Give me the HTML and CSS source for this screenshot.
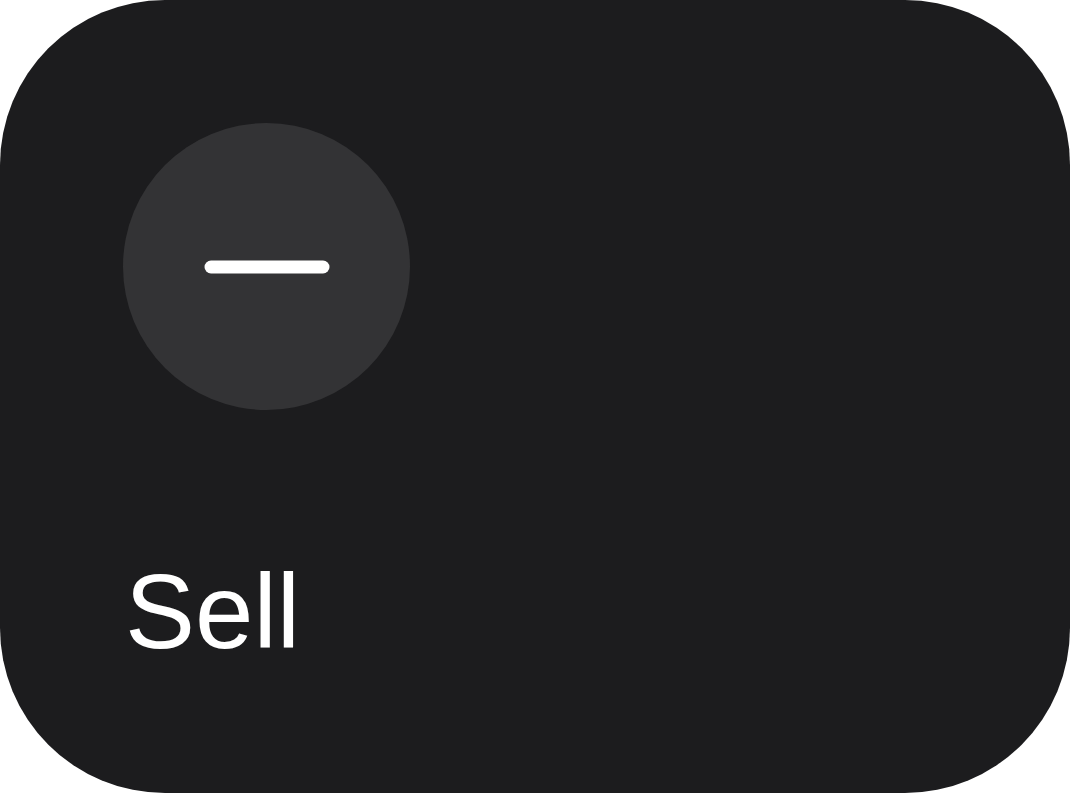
FILE: index.html
```html
<!DOCTYPE html>
<html>
<head>
<meta charset="utf-8">
<link rel="stylesheet" href="styles.css">
</head>
<body>
<div class="card">
  <div class="icon">
    <svg width="126" height="14" viewBox="0 0 126 14"><line x1="7" y1="7" x2="119" y2="7" stroke="#ffffff" stroke-width="13" stroke-linecap="round"/></svg>
  </div>
  <div class="label">Sell</div>
</div>
</body>
</html>
```
FILE: styles.css
```css
html, body {
  margin: 0;
  padding: 0;
  background: #ffffff;
}
.card {
  box-sizing: border-box;
  width: 1070px;
  height: 793px;
  background: #1c1c1e;
  border-radius: 165px;
  padding: 123px 0 0 123px;
  display: flex;
  flex-direction: column;
  gap: 149px;
}
.icon {
  width: 287px;
  height: 287px;
  border-radius: 50%;
  background: #333335;
  display: flex;
  align-items: center;
  justify-content: center;
}
.icon svg {
  display: block;
}
.label {
  font-family: "Liberation Sans", Arial, sans-serif;
  font-size: 105px;
  line-height: 1;
  color: #ffffff;
  margin-left: 2px;
}
```
